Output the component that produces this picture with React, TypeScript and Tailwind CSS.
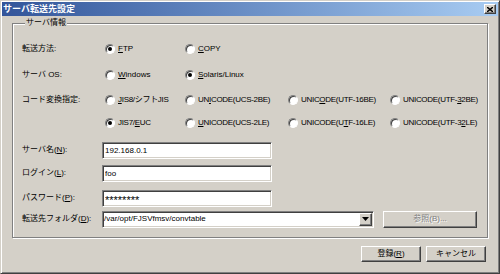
import React from "react";

const sunken =
  "bg-white border border-t-[#808080] border-l-[#808080] border-r-white border-b-white shadow-[inset_1px_1px_0_#404040,inset_-1px_-1px_0_#d4d0c8]";
const raised =
  "bg-[#d4d0c8] border border-t-white border-l-white border-r-[#404040] border-b-[#404040] shadow-[inset_-1px_-1px_0_#808080]";

function Radio({ checked, children, w }: { checked?: boolean; children: React.ReactNode; w: string }) {
  return (
    <div className={`flex items-center gap-[3px] ${w}`}>
      <span className="w-[10px] h-[10px] rounded-full border border-t-[#808080] border-l-[#808080] border-r-white border-b-white bg-white shadow-[inset_1px_1px_0_#404040] flex items-center justify-center shrink-0">
        {checked && <span className="w-[4px] h-[4px] rounded-full bg-black" />}
      </span>
      <span className="whitespace-nowrap">{children}</span>
    </div>
  );
}

function Field({ label, value, big }: { label: React.ReactNode; value: string; big?: boolean }) {
  return (
    <div className="flex items-center h-[18px]">
      <div className="w-[80px]">{label}</div>
      <input
        readOnly
        value={value}
        className={`${sunken} w-[170px] h-[17px] px-[2px] outline-none text-black ${big ? "text-[11px] pt-[3px]" : "text-[8px]"}`}
      />
    </div>
  );
}

export default function App() {
  return (
    <div className="w-[500px] h-[274px] bg-[#d4d0c8] border border-t-[#d4d0c8] border-l-[#d4d0c8] border-r-[#404040] border-b-[#404040] shadow-[inset_1px_1px_0_#fff,inset_-1px_-1px_0_#808080] p-[1px] flex flex-col text-[8px] leading-[10px] text-black font-['Liberation_Sans','Noto_Sans_CJK_JP',sans-serif]">
      {/* title bar */}
      <div className="h-[14px] flex items-center justify-between bg-gradient-to-r from-[#33559a] to-[#a8ccf2] pl-[1px] pr-[2px]">
        <span className="text-white font-bold text-[9px] leading-[10px]">サーバ転送先設定</span>
        <div className={`${raised} w-[12px] h-[10px] flex items-center justify-center`}>
          <svg width="6" height="5" viewBox="0 0 6 5">
            <path d="M0 0L6 5M6 0L0 5" stroke="#000" strokeWidth="1.4" />
          </svg>
        </div>
      </div>

      {/* group */}
      <fieldset className="ml-[10px] mt-[2px] w-[476px] border border-[#808080] shadow-[inset_1px_1px_0_#fff,1px_1px_0_#fff] pl-[9px] pb-[9px]">
        <legend className="ml-[3px] px-[1px] leading-[10px] bg-[#d4d0c8]">サーバ情報</legend>

        <div className="flex items-center h-[18px] mt-[12px]">
          <div className="w-[83px]">転送方法:</div>
          <Radio checked w="w-[80px]">
            <u>F</u>TP
          </Radio>
          <Radio w="w-[103px]">
            <u>C</u>OPY
          </Radio>
        </div>

        <div className="flex items-center h-[18px] mt-[8px]">
          <div className="w-[83px]">サーバ OS:</div>
          <Radio w="w-[80px]">
            <u>W</u>indows
          </Radio>
          <Radio checked w="w-[103px]">
            <u>S</u>olaris/Linux
          </Radio>
        </div>

        <div className="flex items-center h-[18px] mt-[7px] tracking-[-0.3px]">
          <div className="w-[83px] tracking-normal">コード変換指定:</div>
          <Radio w="w-[80px]">
            <u>J</u>IS8/シフトJIS
          </Radio>
          <Radio w="w-[103px]">
            UN<u>I</u>CODE(UCS-2BE)
          </Radio>
          <Radio w="w-[102px]">
            UNIC<u>O</u>DE(UTF-16BE)
          </Radio>
          <Radio w="w-[90px]">
            UNICODE(UTF-<u>3</u>2BE)
          </Radio>
        </div>

        <div className="flex items-center h-[18px] mt-[5px] tracking-[-0.3px]">
          <div className="w-[83px]" />
          <Radio checked w="w-[80px]">
            JIS7/<u>E</u>UC
          </Radio>
          <Radio w="w-[103px]">
            <u>U</u>NICODE(UCS-2LE)
          </Radio>
          <Radio w="w-[102px]">
            UNICODE(U<u>T</u>F-16LE)
          </Radio>
          <Radio w="w-[90px]">
            UNICODE(UTF-3<u>2</u>LE)
          </Radio>
        </div>

        <div className="mt-[9px]">
          <Field
            label={
              <>
                サーバ名(<u>N</u>):
              </>
            }
            value="192.168.0.1"
          />
        </div>
        <div className="mt-[5px]">
          <Field
            label={
              <>
                ログイン(<u>L</u>):
              </>
            }
            value="foo"
          />
        </div>
        <div className="mt-[7px]">
          <Field
            label={
              <>
                パスワード(<u>P</u>):
              </>
            }
            value="********"
            big
          />
        </div>

        <div className="flex items-center h-[18px] mt-[3px]">
          <div className="w-[80px]">
            転送先フォルダ(<u>D</u>):
          </div>
          <div className={`${sunken} w-[272px] h-[17px] flex items-center justify-between pl-[1px] pr-[1px]`}>
            <span>/var/opt/FJSVfmsv/convtable</span>
            <div className={`${raised} w-[13px] h-[13px] flex items-center justify-center`}>
              <svg width="7" height="4" viewBox="0 0 7 4">
                <path d="M0 0H7L3.5 4Z" fill="#000" />
              </svg>
            </div>
          </div>
          <div className={`${raised} ml-[9px] w-[94px] h-[17px] flex items-center justify-center text-[#808080] [text-shadow:1px_1px_0_#fff]`}>
            参照(B)...
          </div>
        </div>
      </fieldset>

      {/* buttons */}
      <div className="flex justify-end gap-[5px] mt-[8px] pr-[12px]">
        <div className={`${raised} w-[60px] h-[16px] flex items-center justify-center`}>
          登録(<u>R</u>)
        </div>
        <div className={`${raised} w-[60px] h-[16px] flex items-center justify-center`}>キャンセル</div>
      </div>
    </div>
  );
}
